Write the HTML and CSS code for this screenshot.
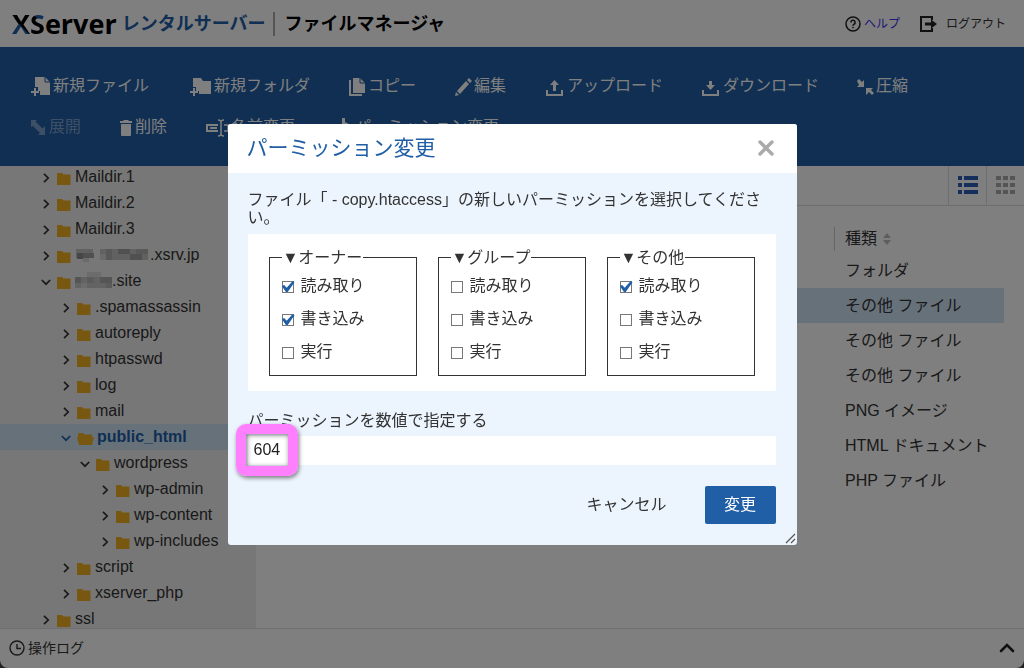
FILE: index.html
```html
<!DOCTYPE html>
<html lang="ja">
<head>
<meta charset="utf-8">
<meta name="viewport" content="width=device-width, initial-scale=1">
<title>XServer ファイルマネージャ</title>
<link rel="stylesheet" href="styles.css">
</head>
<body>
<svg class="symbols" aria-hidden="true">
  <symbol id="folder" viewBox="0 0 14 12"><path d="M0 0h5l1.500 1.500H13.500V12H0z"/></symbol>
  <symbol id="folder-open" viewBox="0 0 17 12"><path d="M1 0h5l1.500 1.500H15V4h2l-2 8H2L0 4h1z"/></symbol>
  <symbol id="chev" viewBox="0 0 10 10"><path d="M3 .8 7.200 5 3 9.200" fill="none" stroke="currentColor" stroke-width="1.700"/></symbol>
  <symbol id="chev-down" viewBox="0 0 10 10"><path d="M.8 3 5 7.200 9.200 3" fill="none" stroke="currentColor" stroke-width="1.700"/></symbol>
</svg>
<div class="app">
  <header class="header">
    <h1 class="brand">
      <span class="logo"><span class="logo-x">X</span><span class="logo-s">S</span>erver</span>
      <span class="service">レンタルサーバー</span>
      <span class="product">ファイルマネージャ</span>
    </h1>
    <nav class="account">
      <a class="account-link help" href="#help"><svg class="line" width="16" height="16" viewBox="0 0 16 16" stroke="#222" stroke-width="1.500"><circle cx="8" cy="8" r="7"/><path d="M5.900 6.500a2.100 2.100 0 1 1 3 1.800q-.9.500-.9 1.400M8 10.800v1.500"/></svg>ヘルプ</a>
      <a class="account-link logout" href="#logout"><svg width="17" height="16" viewBox="0 0 17 16"><path d="M12 4V1H1v14h11v-3" fill="none" stroke="#222" stroke-width="2"/><path d="M5 6.500h6V3.500l6 4.500-6 4.500v-3H5z" fill="#222"/></svg>ログアウト</a>
    </nav>
  </header>

  <div class="toolbar">
    <button class="tool" type="button"><svg width="20" height="20" viewBox="0 0 20 20"><path d="M4 1h10l5 5v13H9v-4H7v-4H4z"/><path d="M14 1v5h5" fill="none" stroke="#205ea6"/><path d="M3 12h2v3h3v2H5v3H3v-3H0v-2h3z"/></svg>新規ファイル</button>
    <button class="tool" type="button"><svg width="25" height="20" viewBox="-3 0 25 20"><path d="M3 2h8l2 3h8v13H9v-3H6v-4H3z"/><path d="M3 12h2v3h3v2H5v3H3v-3H0v-2h3z"/></svg>新規フォルダ</button>
    <button class="tool" type="button"><svg width="18" height="20" viewBox="0 0 18 20"><path d="M5 2h7l5 5v10H5zM1 4h2v14h11v2H1z"/><path d="M12 2v5h5" fill="none" stroke="#205ea6"/></svg>コピー</button>
    <button class="tool" type="button"><svg width="18" height="20" viewBox="0 0 18 20"><path d="M12 5l3 3-9 10-3-3zM13 4l2-2 3 3-2 2zM2 16l3 3-4 1z"/></svg>編集</button>
    <button class="tool" type="button"><svg width="21" height="20" viewBox="-1 0 21 20"><path d="M1 14h2v4h13v-4h2v6H1zM8 15V9H5l4.500-5L14 9h-3v6z"/></svg>アップロード</button>
    <button class="tool" type="button"><svg width="20" height="20" viewBox="0 0 20 20"><path d="M1 14h2v4h13v-4h2v6H1zM8 5h3v4h3l-4.500 5L5 9h3z"/></svg>ダウンロード</button>
    <button class="tool" type="button"><svg width="17" height="20" viewBox="0 0 17 20"><path d="M0 5l2-2 3 3 2-2v7H0l2-2zM9 12h7l-2 2 3 3-2 2-3-3-3 3z"/></svg>圧縮</button>
    <button class="tool" type="button" disabled><svg width="16" height="20" viewBox="0 0 16 20"><path d="M0 3h6L4.500 4.500l7 7L14 9v9H7l2-2-7-7L0 10z"/></svg>展開</button>
    <button class="tool" type="button"><svg width="14" height="20" viewBox="0 0 14 20"><path d="M1 4h3l1-1h4l1 1h3v2H1zM2 7h10v11q0 1-1 1H3q-1 0-1-1z"/></svg>削除</button>
    <button class="tool" type="button"><svg width="24" height="20" viewBox="0 0 24 20"><path d="M1 7h12v2H3v4h10v2H1zM5 10h7v2H5z"/><path d="M13 3q3 0 3 2 0-2 3-2M16 5v12M13 19q3 0 3-2 0 2 3 2M19 8h4v6h-4" fill="none" stroke="currentColor" stroke-width="1.500"/></svg>名前変更</button>
    <button class="tool" type="button"><svg width="20" height="20" viewBox="0 0 20 20"><path d="M9 1h3v18H9zM3 7h6v3H3zM12 5l6 3v3l-6-3z"/></svg>パーミッション変更</button>
  </div>

  <div class="workspace">
    <aside class="sidebar">
      <ul class="tree">
        <li class="node"><svg class="arrow"><use href="#chev"/></svg><svg class="dir"><use href="#folder"/></svg>Maildir.1</li>
        <li class="node"><svg class="arrow"><use href="#chev"/></svg><svg class="dir"><use href="#folder"/></svg>Maildir.2</li>
        <li class="node"><svg class="arrow"><use href="#chev"/></svg><svg class="dir"><use href="#folder"/></svg>Maildir.3</li>
        <li class="node"><svg class="arrow"><use href="#chev"/></svg><svg class="dir"><use href="#folder"/></svg><svg class="mosaic" width="75" height="16" viewBox="0 0 75 16" shape-rendering="crispEdges"><path fill="#c2c2c2" d="M1 2h17v9H1zM25 2h48v11H25z"/><path fill="#8c8c8c" d="M2 6h6v6H2z"/><path fill="#a0a0a0" d="M8 6h11v5H8zM43 2h12v5H43zM55 7h12v6H55z"/><path fill="#b0b0b0" d="M31 2h6v11h-6zM61 2h12v5H61z"/><path fill="#d4d4d4" d="M8 11h6v4H8zM25 7h6v6h-6z"/></svg>.xsrv.jp</li>
        <li class="node"><svg class="arrow"><use href="#chev-down"/></svg><svg class="dir"><use href="#folder"/></svg><svg class="mosaic" width="37" height="18" viewBox="0 0 37 18" shape-rendering="crispEdges"><path fill="#c6c6c6" d="M0 5h37v11H0z"/><path fill="#d8d8d8" d="M12 0h14v5H12zM6 11h6v5H6z"/><path fill="#aaa" d="M0 5h6v6H0zM25 5h12v6H25z"/><path fill="#b6b6b6" d="M12 5h7v6h-7zM31 11h6v5h-6z"/></svg>.site</li>
        <li class="node level-1"><svg class="arrow"><use href="#chev"/></svg><svg class="dir"><use href="#folder"/></svg>.spamassassin</li>
        <li class="node level-1"><svg class="arrow"><use href="#chev"/></svg><svg class="dir"><use href="#folder"/></svg>autoreply</li>
        <li class="node level-1"><svg class="arrow"><use href="#chev"/></svg><svg class="dir"><use href="#folder"/></svg>htpasswd</li>
        <li class="node level-1"><svg class="arrow"><use href="#chev"/></svg><svg class="dir"><use href="#folder"/></svg>log</li>
        <li class="node level-1"><svg class="arrow"><use href="#chev"/></svg><svg class="dir"><use href="#folder"/></svg>mail</li>
        <li class="node level-1 current"><svg class="arrow"><use href="#chev-down"/></svg><svg class="dir open"><use href="#folder-open"/></svg>public_html</li>
        <li class="node level-2"><svg class="arrow"><use href="#chev-down"/></svg><svg class="dir"><use href="#folder"/></svg>wordpress</li>
        <li class="node level-3"><svg class="arrow"><use href="#chev"/></svg><svg class="dir"><use href="#folder"/></svg>wp-admin</li>
        <li class="node level-3"><svg class="arrow"><use href="#chev"/></svg><svg class="dir"><use href="#folder"/></svg>wp-content</li>
        <li class="node level-3"><svg class="arrow"><use href="#chev"/></svg><svg class="dir"><use href="#folder"/></svg>wp-includes</li>
        <li class="node level-1"><svg class="arrow"><use href="#chev"/></svg><svg class="dir"><use href="#folder"/></svg>script</li>
        <li class="node level-1"><svg class="arrow"><use href="#chev"/></svg><svg class="dir"><use href="#folder"/></svg>xserver_php</li>
        <li class="node"><svg class="arrow"><use href="#chev"/></svg><svg class="dir"><use href="#folder"/></svg>ssl</li>
      </ul>
    </aside>
    <main class="files">
      <div class="viewbar">
        <button class="view active" type="button" aria-label="リスト表示"><svg width="20" height="19" viewBox="0 0 20 19"><path d="M0 0h4v4H0zM6 0h14v4H6zM0 7h4v4H0zM6 7h14v4H6zM0 14h4v4H0zM6 14h14v4H6z"/></svg></button>
        <button class="view" type="button" aria-label="アイコン表示"><svg width="20" height="19" viewBox="0 0 20 19"><path d="M0 0h5v4H0zM7 0h5v4H7zM14 0h5v4h-5zM0 7h5v4H0zM7 7h5v4H7zM14 7h5v4h-5zM0 14h5v4H0zM7 14h5v4H7zM14 14h5v4h-5z"/></svg></button>
      </div>
      <table class="list">
        <thead><tr><td></td><th scope="col"><span class="sortable">種類<svg width="8" height="12" viewBox="0 0 8 12"><path d="M4 0l4 5H0zM4 12L0 7h8z" fill="#bbb"/></svg></span></th></tr></thead>
        <tbody>
          <tr><td></td><td>フォルダ</td></tr>
          <tr class="selected"><td></td><td>その他 ファイル</td></tr>
          <tr><td></td><td>その他 ファイル</td></tr>
          <tr><td></td><td>その他 ファイル</td></tr>
          <tr><td></td><td>PNG イメージ</td></tr>
          <tr><td></td><td>HTML ドキュメント</td></tr>
          <tr><td></td><td>PHP ファイル</td></tr>
        </tbody>
      </table>
    </main>
  </div>

  <footer class="footer">
    <span class="log"><svg class="line" width="16" height="16" viewBox="0 0 16 16" stroke="#333" stroke-width="1.400"><circle cx="8" cy="8" r="7"/><path d="M8 4v4.500h4"/></svg>操作ログ</span>
    <button class="expand" type="button" aria-label="開く"><svg width="16" height="10" viewBox="0 0 16 10"><path d="M2 8l6-6 6 6" fill="none" stroke="#222" stroke-width="2.600" stroke-linecap="round"/></svg></button>
  </footer>
</div>

<div class="overlay">
  <form class="dialog" role="dialog" aria-labelledby="dialog-title">
    <div class="dialog-head">
      <h2 class="dialog-title" id="dialog-title">パーミッション変更</h2>
      <button class="close" type="button" aria-label="閉じる"><svg width="18" height="18" viewBox="0 0 18 18"><path d="M3 3l12 12M15 3L3 15" stroke="#aaa" stroke-width="3.400" stroke-linecap="round"/></svg></button>
    </div>
    <div class="dialog-body">
      <p class="message">ファイル「 - copy.htaccess」の新しいパーミッションを選択してください。</p>
      <div class="groups">
        <fieldset class="group"><legend>▼オーナー</legend>
          <label class="perm"><input type="checkbox" checked>読み取り</label>
          <label class="perm"><input type="checkbox" checked>書き込み</label>
          <label class="perm"><input type="checkbox">実行</label>
        </fieldset>
        <fieldset class="group"><legend>▼グループ</legend>
          <label class="perm"><input type="checkbox">読み取り</label>
          <label class="perm"><input type="checkbox">書き込み</label>
          <label class="perm"><input type="checkbox">実行</label>
        </fieldset>
        <fieldset class="group"><legend>▼その他</legend>
          <label class="perm"><input type="checkbox" checked>読み取り</label>
          <label class="perm"><input type="checkbox">書き込み</label>
          <label class="perm"><input type="checkbox">実行</label>
        </fieldset>
      </div>
      <label class="mode-label" for="mode">パーミッションを数値で指定する</label>
      <div class="mode">
        <input class="mode-input" id="mode" type="text" value="604">
        <span class="marker"></span>
      </div>
      <div class="actions">
        <button class="cancel" type="button">キャンセル</button>
        <button class="submit" type="submit">変更</button>
      </div>
    </div>
    <svg class="grip" width="11" height="11" viewBox="0 0 11 11"><path d="M1 10L10 1M6 10l4-4" stroke="#555" stroke-width="1.200"/></svg>
  </form>
</div>
</body>
</html>
```
FILE: styles.css
```css
* { box-sizing: border-box; }

html { height: 100%; background: #444; }

body {
  margin: 0;
  height: 100%;
  font: 16px/24px "Liberation Sans", "Noto Sans CJK JP", sans-serif;
  color: #333;
}

button, input { font: inherit; color: inherit; }
button { padding: 0; border: 0; background: none; white-space: nowrap; }
svg { flex: none; fill: currentColor; }
.line { fill: none; }
.symbols { position: absolute; width: 0; height: 0; }

.app {
  display: flex;
  flex-direction: column;
  height: 100%;
  overflow: hidden;
  background: #fff;
  border-radius: 0 0 8px 8px;
}

/* header */
.header {
  display: flex;
  align-items: center;
  justify-content: space-between;
  flex: none;
  height: 47px;
  padding: 0 18px 0 12px;
}
.brand { display: flex; align-items: center; margin: 0; font-size: 18px; white-space: nowrap; color: #000; }
.logo { margin-right: 5px; font-family: "Open Sans", sans-serif; font-size: 27px; }
.logo-x, .logo-s { color: transparent; background-clip: text; -webkit-background-clip: text; }
.logo-x { background-image: linear-gradient(45deg, #205ea6 45%, #000 46%); }
.logo-s { background-image: linear-gradient(225deg, #205ea6 40%, #000 41%); }
.service { color: #205ea6; }
.product { margin-left: 7px; padding-left: 10px; border-left: 2px solid #aaa; }
.account { display: flex; align-items: center; gap: 20px; font-size: 12px; }
.account-link { display: flex; align-items: center; color: #333; text-decoration: none; }
.help { gap: 3px; color: #4030ee; }
.logout { gap: 9px; }

/* toolbar */
.toolbar {
  display: flex;
  flex-wrap: wrap;
  flex: none;
  gap: 17px 38px;
  padding: 27px 31px;
  background: #205ea6;
  color: #fff;
}
.tool { display: flex; align-items: center; gap: 2px; }
.tool:disabled { opacity: .4; }

/* folder tree */
.workspace { display: flex; flex: 1; min-height: 0; }
.sidebar { width: 256px; flex: none; overflow: hidden; background: #eee; }
.tree { margin: -2px 0 0; padding: 0; list-style: none; }
.node { display: flex; align-items: center; height: 26px; padding-left: 41px; }
.level-1 { padding-left: 61px; }
.level-2 { padding-left: 80px; }
.level-3 { padding-left: 100px; }
.arrow { width: 10px; height: 10px; margin: 2px 6px 0 0; }
.dir { width: 14px; height: 12px; margin: 3px 4px 0 0; color: #f0b020; }
.open { width: 17px; margin-right: 3px; }
.current { background: #cfe3f5; color: #205ea6; font-weight: bold; }

/* file list */
.files { flex: 1; min-width: 0; overflow: hidden; }
.viewbar { display: flex; justify-content: flex-end; height: 40px; border-bottom: 1px solid #ddd; }
.view { display: grid; place-items: center; width: 38px; border-left: 1px solid #ddd; color: #aaa; }
.active { color: #2a5cb8; }
.list { width: calc(100% - 20px); margin-top: 18px; border-collapse: collapse; table-layout: fixed; }
.list td, .list th { height: 35px; padding: 0 0 0 11px; text-align: left; font-weight: normal; }
.list thead td, .list thead th { height: 29px; }
.list td:last-child, .list th:last-child { width: 170px; }
.list thead th { padding: 0; }
.sortable { display: flex; align-items: center; gap: 6px; padding-left: 10px; border-left: 1px solid #ccc; }
.selected { background: #cfe3f5; }

.footer {
  display: flex;
  align-items: center;
  justify-content: space-between;
  flex: none;
  height: 40px;
  padding: 0 9px 2px;
  border-top: 1px solid #ddd;
  font-size: 14px;
}
.log { display: flex; align-items: center; gap: 3px; }
.expand { display: flex; }

/* dialog */
.overlay {
  position: fixed;
  inset: 0;
  display: grid;
  place-items: center;
  background: rgba(0, 0, 0, .5);
}
.dialog { position: relative; width: 569px; max-width: 100%; border-radius: 3px; overflow: hidden; background: #ecf4fd; }
.dialog-head {
  display: flex;
  align-items: center;
  justify-content: space-between;
  height: 49px;
  padding: 0 22px 0 19px;
  background: #fff;
}
.dialog-title { margin: 0; font-size: 21px; font-weight: normal; color: #205ea6; }
.close { display: flex; }
.dialog-body { padding: 18px 21px 21px 20px; }
.message { margin: 0 0 7px; line-height: 18px; }
.groups { display: grid; grid-template-columns: repeat(3, 1fr); gap: 21px; padding: 12px 21px 15px; background: #fff; }
.group { min-width: 0; margin: 0; padding: 0 12px 6px; border: 1px solid #333; }
.group legend { padding: 0 1px; }
.perm { display: flex; align-items: center; gap: 7px; height: 33px; }
.perm input { position: relative; width: 12px; height: 12px; margin: 2px 0 0; appearance: none; border: 1px solid #777; background: #fff; }
.perm input:checked::before {
  content: "";
  position: absolute;
  inset: -1px -2px -1px -1px;
  background: #205ea6;
  clip-path: polygon(2% 42%, 20% 34%, 40% 56%, 86% 0, 100% 10%, 48% 92%, 34% 92%);
}
.mode-label { display: block; margin-top: 18px; }
.mode { position: relative; margin-top: 3px; }
.mode-input { display: block; width: 100%; height: 29px; padding: 0 6px; border: 0; background: #fff; color: #222; }
.marker {
  position: absolute;
  top: -12px;
  left: -12px;
  width: 62px;
  height: 52px;
  border: 10px solid #ff80ff;
  border-radius: 10px;
  box-shadow: 1px 2px 4px rgba(0, 0, 0, .5), inset 1px 1px 5px rgba(0, 0, 0, .5);
}
.actions { display: flex; justify-content: flex-end; gap: 38px; margin-top: 21px; }
.submit { width: 71px; height: 38px; border-radius: 2px; background: #205ea6; color: #fff; }
.grip { position: absolute; right: 1px; bottom: 1px; }
```
